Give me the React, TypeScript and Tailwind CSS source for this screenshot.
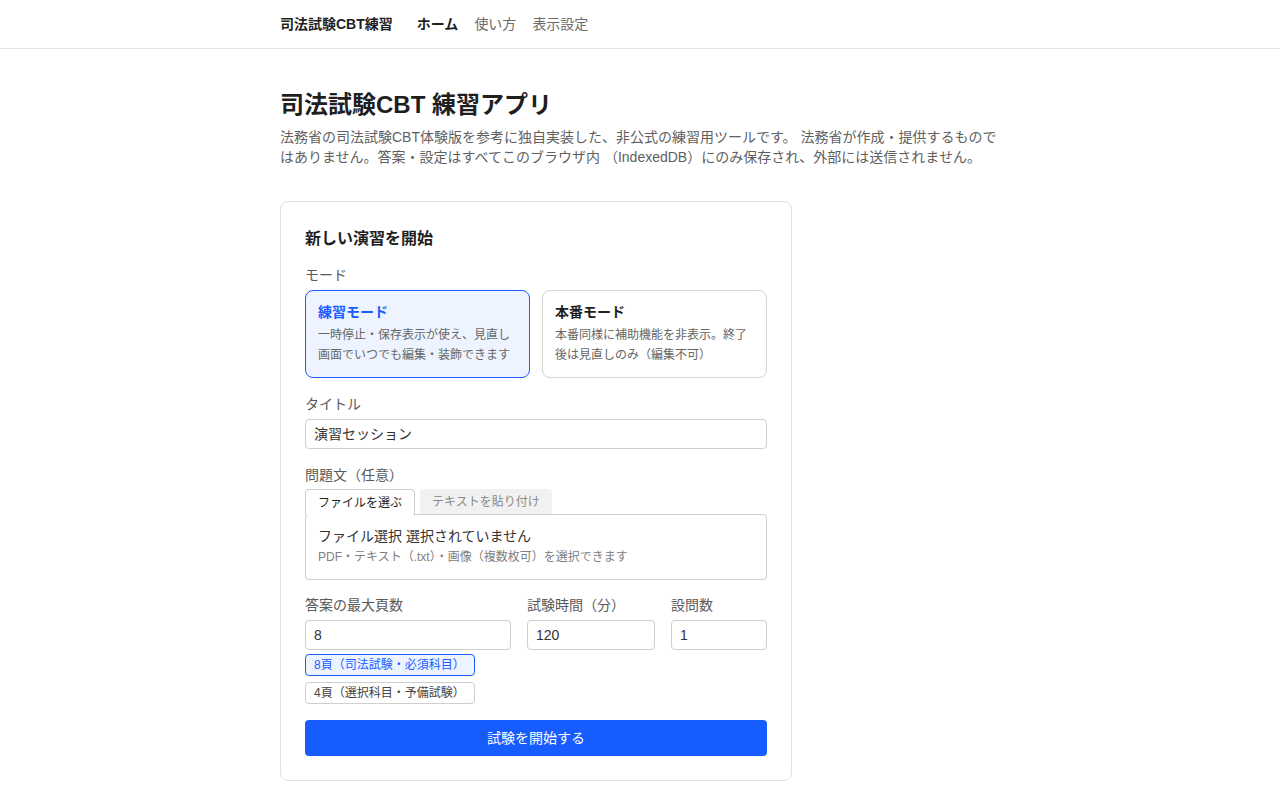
import React from "react";

export default function App() {
  return (
    <div className="min-h-screen bg-white text-[#1f1f1f] font-['Liberation_Sans','Noto_Sans_CJK_JP',sans-serif]">
      <header className="h-[49px] border-b border-[#e4e4e4]">
        <div className="mx-auto flex h-12 w-[720px] items-center text-[14px]">
          <span className="font-bold text-[#1f1f1f]">司法試験CBT練習</span>
          <nav className="ml-6 flex items-center gap-4">
            <span className="font-bold text-[#1f1f1f]">ホーム</span>
            <span className="text-[#6b6b6b]">使い方</span>
            <span className="text-[#6b6b6b]">表示設定</span>
          </nav>
        </div>
      </header>
      <main className="mx-auto w-[720px] pt-[40px] pb-10">
        <h1 className="text-[24px] font-bold leading-8 text-[#1f1f1f]">司法試験CBT 練習アプリ</h1>
        <p className="mt-[6px] text-[14px] leading-5 text-[#5f5f5f]">
          法務省の司法試験CBT体験版を参考に独自実装した、非公式の練習用ツールです。 法務省が作成・提供するものではありません。答案・設定はすべてこのブラウザ内 （IndexedDB）にのみ保存され、外部には送信されません。
        </p>
        <section className="mt-[34px] w-[512px] rounded-lg border border-[#e2e2e2] px-6 pt-[25px] pb-6">
          <h2 className="text-[16px] font-bold leading-6 text-[#1f1f1f]">新しい演習を開始</h2>
          <div className="mt-[14px] text-[14px] leading-5 text-[#5a5a5a]">モード</div>
          <div className="mt-[5px] grid grid-cols-2 gap-3">
            <div className="h-[88px] rounded-lg border border-[#1a5cff] bg-[#eef4ff] px-3 pt-[11px]">
              <div className="text-[14px] font-bold leading-5 text-[#1a5cff]">練習モード</div>
              <div className="mt-[3px] text-[12px] leading-5 text-[#666]">一時停止・保存表示が使え、見直し画面でいつでも編集・装飾できます</div>
            </div>
            <div className="h-[88px] rounded-lg border border-[#d4d4d4] bg-white px-3 pt-[11px]">
              <div className="text-[14px] font-bold leading-5 text-[#1f1f1f]">本番モード</div>
              <div className="mt-[3px] text-[12px] leading-5 text-[#666]">本番同様に補助機能を非表示。終了後は見直しのみ（編集不可）</div>
            </div>
          </div>
          <div className="mt-[16px] text-[14px] leading-5 text-[#5a5a5a]">タイトル</div>
          <div className="mt-[5px] flex h-[30px] items-center rounded border border-[#cfcfcf] px-2 text-[14px] text-[#333]">演習セッション</div>
          <div className="mt-[16px] text-[14px] leading-5 text-[#5a5a5a]">問題文（任意）</div>
          <div className="mt-[4px] flex items-end gap-[5px] text-[12px]">
            <div className="relative z-10 -mb-px flex h-[26px] items-center rounded-t border border-b-0 border-[#cfcfcf] bg-white px-3 text-[#1f1f1f]">ファイルを選ぶ</div>
            <div className="flex h-[25px] items-center rounded-t bg-[#f1f1f1] px-3 text-[#8a8a8a]">テキストを貼り付け</div>
          </div>
          <div className="h-[66px] rounded border border-[#cfcfcf] px-3 pt-[11px]">
            <div className="text-[14px] leading-5 text-[#333]">ファイル選択 選択されていません</div>
            <div className="mt-[1px] text-[12px] leading-5 text-[#808080]">PDF・テキスト（.txt）・画像（複数枚可）を選択できます</div>
          </div>
          <div className="mt-[15px] grid grid-cols-[206px_128px_1fr] gap-4">
            <div>
              <div className="text-[14px] leading-5 text-[#5a5a5a]">答案の最大頁数</div>
              <div className="mt-[5px] flex h-[30px] items-center rounded border border-[#cfcfcf] px-2 text-[14px] text-[#333]">8</div>
              <div className="mt-[4px] flex h-[22px] w-[170px] items-center rounded border border-[#1a5cff] bg-[#eef4ff] px-2 text-[12px] text-[#1a5cff]">8頁（司法試験・必須科目）</div>
              <div className="mt-[6px] flex h-[22px] w-[170px] items-center rounded border border-[#cfcfcf] bg-white px-2 text-[12px] text-[#444]">4頁（選択科目・予備試験）</div>
            </div>
            <div>
              <div className="text-[14px] leading-5 text-[#5a5a5a]">試験時間（分）</div>
              <div className="mt-[5px] flex h-[30px] items-center rounded border border-[#cfcfcf] px-2 text-[14px] text-[#333]">120</div>
            </div>
            <div>
              <div className="text-[14px] leading-5 text-[#5a5a5a]">設問数</div>
              <div className="mt-[5px] flex h-[30px] items-center rounded border border-[#cfcfcf] px-2 text-[14px] text-[#333]">1</div>
            </div>
          </div>
          <button className="mt-[16px] flex h-[36px] w-full items-center justify-center rounded bg-[#175cff] text-[14px] text-white">試験を開始する</button>
        </section>
      </main>
    </div>
  );
}
